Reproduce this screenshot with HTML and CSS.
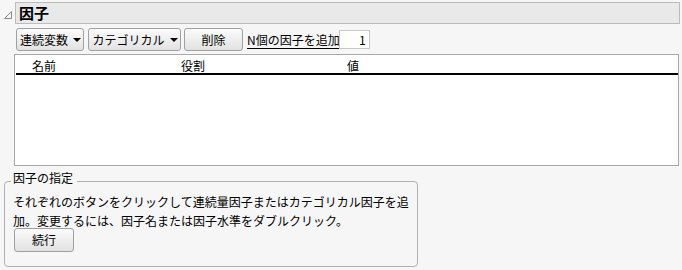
FILE: index.html
```html
<!DOCTYPE html>
<html lang="ja">

<head>
    <meta charset="UTF-8">
    <title>因子</title>
    <link rel="stylesheet" href="styles.css">
</head>

<body>
    <div class="outline">
        <!-- Disclosure header -->
        <div class="outline-head">
            <svg class="toggle" width="10" height="10" viewBox="0 0 10 10">
                <polygon points="8.5,1.5 8.5,8.5 1.5,8.5" fill="none" stroke="#8a8a8a" stroke-width="1"/>
            </svg>
            <div class="title-bar">因子</div>
        </div>

        <div class="outline-body">
            <!-- Toolbar -->
            <div class="toolbar">
                <button class="btn btn-menu btn-cont">連続変数<span class="caret"></span></button>
                <button class="btn btn-menu btn-cat">カテゴリカル<span class="caret"></span></button>
                <button class="btn btn-del">削除</button>
                <span class="add-label">N個の因子を追加</span>
                <input class="count" type="text" value="1">
            </div>

            <!-- Factor table -->
            <div class="factor-table">
                <div class="table-head">
                    <span class="col col-name">名前</span>
                    <span class="col col-role">役割</span>
                    <span class="col col-value">値</span>
                </div>
            </div>
        </div>

        <!-- Instructions -->
        <fieldset class="spec">
            <legend>因子の指定</legend>
            <p>それぞれのボタンをクリックして連続量因子またはカテゴリカル因子を追加。変更するには、因子名または因子水準をダブルクリック。</p>
            <button class="btn btn-go">続行</button>
        </fieldset>
    </div>
</body>

</html>
```

FILE: styles.css
```css
body {
    margin: 0;
    background-color: #f6f6f6;
    font-family: "Noto Sans CJK JP", "Noto Sans", sans-serif;
    font-size: 12px;
    color: #000;
}

.outline {
    padding-top: 2px;
}

.outline-head {
    display: flex;
    align-items: flex-start;
}

.toggle {
    margin: 8px 0 0 3px;
    display: block;
}

.title-bar {
    margin-left: 2px;
    width: 660px;
    height: 20px;
    line-height: 20px;
    background-color: #e9e9e9;
    border: 1px solid #bcbcbc;
    padding-left: 3px;
    font-size: 15px;
    font-weight: bold;
}

.outline-body {
    margin-left: 14px;
    width: 665px;
}

.toolbar {
    display: flex;
    align-items: center;
    gap: 4px;
    margin-top: 4px;
    padding-left: 2px;
}

.btn {
    font-family: inherit;
    font-size: 12px;
    height: 23px;
    padding: 0 5px;
    border: 1px solid #a0a0a0;
    border-radius: 3px;
    background: linear-gradient(#fbfbfb, #e2e2e2);
    color: #000;
    line-height: 20px;
    white-space: nowrap;
}

.btn-menu {
    display: flex;
    align-items: center;
    justify-content: center;
    gap: 5px;
    padding: 0 1px 0 2px;
}

.btn-cont {
    width: 68px;
}

.btn-cat {
    width: 93px;
    margin-right: -1px;
}

.caret {
    flex: none;
    width: 0;
    height: 0;
    border-left: 4px solid transparent;
    border-right: 4px solid transparent;
    border-top: 4px solid #000;
    margin-top: 1px;
}

.btn-del {
    width: 59px;
}

.add-label {
    border-bottom: 1px solid #000;
    line-height: 17px;
    white-space: nowrap;
}

.count {
    width: 23px;
    height: 17px;
    margin-left: -5px;
    padding: 0 3px;
    border: 1px solid #c8c8c8;
    background-color: #fff;
    text-align: right;
    font-family: inherit;
    font-size: 12px;
}

.factor-table {
    margin-top: 3px;
    height: 109px;
    background-color: #fff;
    border: 1px solid #a8a8a8;
    padding: 1px 0 0 1px;
}

.table-head {
    position: relative;
    height: 17px;
    border-bottom: 2px solid #000;
}

.col {
    position: absolute;
    top: 1px;
}

.col-name {
    left: 16px;
}

.col-role {
    left: 165px;
}

.col-value {
    left: 331px;
}

.spec {
    box-sizing: border-box;
    margin: 5px 0 0 4px;
    width: 414px;
    height: 96px;
    padding: 0 4px 0 8px;
    border: 1px solid #b0b0b0;
    border-radius: 4px;
}

.spec legend {
    padding: 0 4px 6px 2px;
    margin-left: -2px;
    line-height: 14px;
}

.spec p {
    margin: 1px 0 0;
    line-height: 19px;
}

.btn-go {
    display: block;
    width: 60px;
    height: 24px;
    margin: -2px 0 0 1px;
}
```
